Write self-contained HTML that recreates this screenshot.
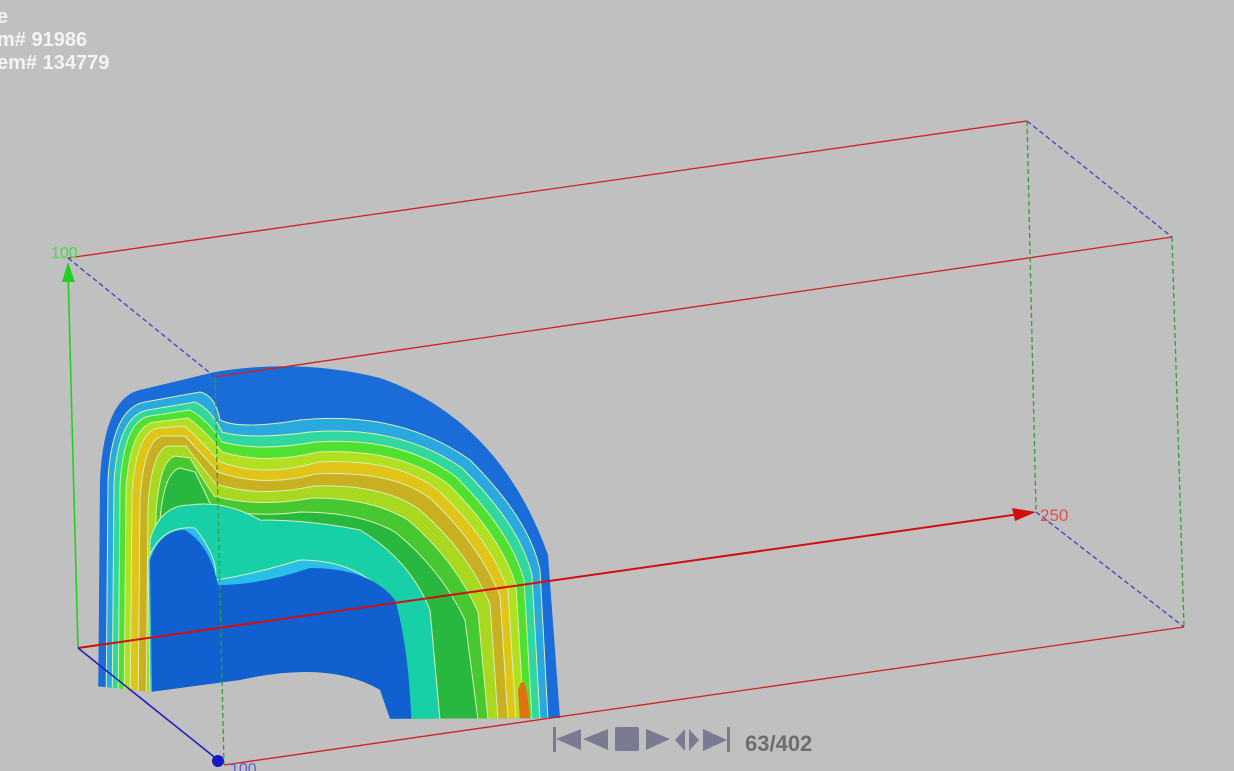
<!DOCTYPE html>
<html><head><style>
html,body{margin:0;padding:0;background:#c0c0c0;width:1234px;height:771px;overflow:hidden;font-family:"Liberation Sans",sans-serif}
.info{position:absolute;left:-3px;top:6px;color:#f4f4f4;font-weight:bold;font-size:20px;line-height:23px}
</style></head><body>
<div class="info">e<br>m# 91986<br>em# 134779</div>
<svg width="1234" height="771" style="position:absolute;left:0;top:0">
<defs>
<clipPath id="c"><path d="M98,720 L100,480 Q104,398 140,390 L215,372 Q300,358 380,378 Q500,420 548,555 L560,718 Z"/></clipPath>
</defs>
<g clip-path="url(#c)">
<rect x="90" y="360" width="480" height="380" fill="#1a6cd8"/>
<g stroke="#d8f0b0" stroke-width="1">
<path d="M106,720 L108,480 Q112,408 145,402 L200,392 Q215,395 220,420 Q240,430 300,420 Q400,410 470,460 Q530,520 540,570 L548,720 Z" fill="#2aa8e0"/>
<path d="M112,720 L114,482 Q118,415 148,410 L195,402 Q212,410 222,432 Q250,440 310,432 Q400,425 462,468 Q520,525 532,575 L540,720 Z" fill="#30d8a0"/>
<path d="M118,720 L120,485 Q124,420 150,416 L190,410 Q208,420 222,442 Q260,452 315,442 Q400,436 455,476 Q510,530 524,580 L532,720 Z" fill="#50e030"/>
<path d="M124,720 L126,490 Q130,425 155,422 L188,418 Q205,430 222,452 Q265,465 318,452 Q400,448 448,484 Q500,535 516,585 L524,720 Z" fill="#b0e020"/>
<path d="M130,720 L132,495 Q136,432 158,428 L185,426 Q200,440 220,462 Q265,478 318,462 Q400,458 440,492 Q490,540 508,590 L516,720 Z" fill="#e0c418"/>
<path d="M138,720 L140,500 Q144,440 162,436 L185,436 Q198,450 218,472 Q262,488 316,474 Q395,470 432,500 Q480,546 500,596 L508,720 Z" fill="#c8b020"/>
<path d="M146,720 L148,505 Q152,450 168,446 L186,446 Q198,462 216,484 Q260,498 314,486 Q385,484 420,510 Q468,552 490,604 L498,720 Z" fill="#a8d820"/>
<path d="M154,720 L156,512 Q160,460 175,456 L190,458 Q200,475 214,496 Q258,508 312,498 Q372,498 408,520 Q455,560 478,612 L488,720 Z" fill="#48c830"/>
<path d="M160,720 L160,520 Q164,472 180,468 L195,472 Q205,492 212,508 Q255,518 300,512 Q360,512 395,532 Q440,568 465,620 L478,720 Z" fill="#28b840"/>
<path d="M150,690 L150,540 Q160,505 190,505 Q225,500 260,520 Q310,520 360,530 Q410,560 430,610 L440,720 L150,720 Z" fill="#18d0a8"/>
<path d="M150,690 L148,560 Q160,525 195,528 Q220,560 215,580 Q250,575 300,560 Q360,560 390,600 L412,740 L150,720 Z" fill="#28c0e8"/>
</g>
<path d="M152,690 L150,560 Q160,530 185,530 Q210,545 218,585 Q260,585 310,568 Q370,568 395,600 Q410,650 412,740 L150,740 Z" fill="#1060d0"/>
<path d="M520,720 L518,690 Q524,670 528,700 L530,720Z" fill="#e07010"/>
</g>
<path d="M95,686 L150,692 L240,680 Q330,660 380,690 L398,742 L95,742 Z" fill="#c0c0c0"/>
<g fill="none" stroke-width="1.3">
<line x1="68" y1="258" x2="1027" y2="121" stroke="#d02020"/>
<line x1="215" y1="377" x2="1172" y2="237" stroke="#d02020"/>
<line x1="224" y1="765" x2="1184" y2="627" stroke="#d02020"/>
<line x1="1027" y1="121" x2="1172" y2="237" stroke="#4040c0" stroke-dasharray="5,3"/>
<line x1="68" y1="258" x2="215" y2="377" stroke="#4040c0" stroke-dasharray="5,3"/>
<line x1="1036" y1="512" x2="1184" y2="627" stroke="#4040c0" stroke-dasharray="5,3"/>
<line x1="1027" y1="121" x2="1036" y2="512" stroke="#30a030" stroke-dasharray="5,3"/>
<line x1="1172" y1="237" x2="1184" y2="627" stroke="#30a030" stroke-dasharray="5,3"/>
<line x1="215" y1="377" x2="224" y2="765" stroke="#30a030" stroke-dasharray="5,3"/>
<line x1="68" y1="270" x2="78" y2="648" stroke="#20d020" stroke-width="1.6"/>
<line x1="78" y1="648" x2="1020" y2="514" stroke="#d01010" stroke-width="2"/>
<line x1="78" y1="648" x2="218" y2="760" stroke="#2020c0" stroke-width="1.6"/>
</g>
<path d="M62,282 L68,262 L75,282 Z" fill="#20d020"/>
<path d="M1012,508 L1036,512 L1015,521 Z" fill="#d01010"/>
<circle cx="218" cy="761" r="6" fill="#1818c0"/>
<text x="51" y="258" fill="#40e040" font-size="16" font-family="Liberation Sans,sans-serif">100</text>
<text x="1040" y="521" fill="#e05050" font-size="17" font-family="Liberation Sans,sans-serif">250</text>
<text x="230" y="774" fill="#6060d0" font-size="16" font-family="Liberation Sans,sans-serif">100</text>
<g fill="#7a7a90">
<rect x="553" y="727" width="3" height="25"/>
<path d="M556,739 L581,729 L581,750 Z"/>
<path d="M583,739 L608,729 L608,750 Z"/>
<rect x="615" y="727" width="24" height="24" rx="2"/>
<path d="M646,729 L670,739 L646,750 Z"/>
<path d="M675,740 L685,729 L685,751 Z"/>
<path d="M689,729 L699,740 L689,751 Z"/>
<path d="M703,729 L727,740 L703,751 Z"/>
<rect x="727" y="727" width="3" height="25"/>
</g>
<text x="745" y="751" fill="#6e6e6e" font-size="22" font-weight="bold" font-family="Liberation Sans,sans-serif">63/402</text>
</svg>
</body></html>
